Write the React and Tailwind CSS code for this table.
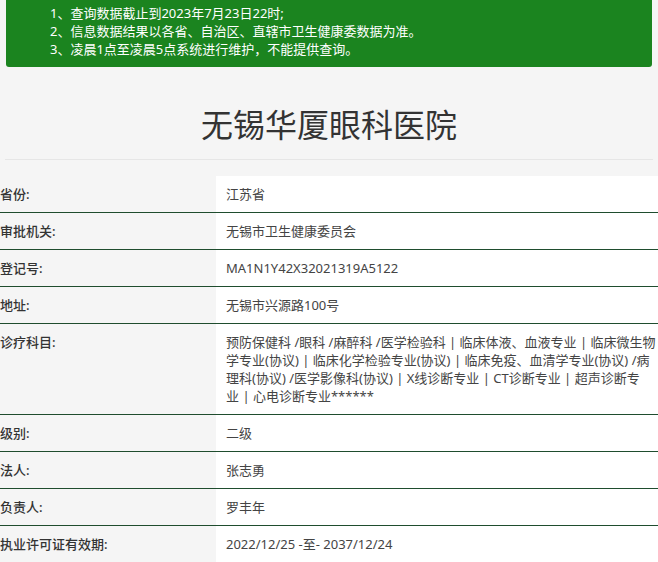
import React from "react";

const scope = [
  "预防保健科 /眼科 /麻醉科 /医学检验科 | 临床体液、血液专业 | 临床微生物",
  "学专业(协议) | 临床化学检验专业(协议) | 临床免疫、血清学专业(协议) /病",
  "理科(协议) /医学影像科(协议) | X线诊断专业 | CT诊断专业 | 超声诊断专",
  "业 | 心电诊断专业******",
];

const rows = [
  { label: "省份:", value: "江苏省" },
  { label: "审批机关:", value: "无锡市卫生健康委员会" },
  { label: "登记号:", value: "MA1N1Y42X32021319A5122" },
  { label: "地址:", value: "无锡市兴源路100号" },
  {
    label: "诊疗科目:",
    value: scope.map((line, i) => (
      <span key={i} className="block whitespace-nowrap">
        {line}
      </span>
    )),
  },
  { label: "级别:", value: "二级" },
  { label: "法人:", value: "张志勇" },
  { label: "负责人:", value: "罗丰年" },
  { label: "执业许可证有效期:", value: "2022/12/25 -至- 2037/12/24" },
];

function App() {
  return (
    <div
      className="bg-[#f5f5f5] min-h-[100vh] text-[#333] overflow-hidden"
      style={{ fontFamily: '"Noto Sans", "Noto Sans CJK SC", sans-serif' }}
    >
      <div className="mx-[6px] bg-[#1b841f] rounded-b-[3px] pl-[44px] pt-[4px] pb-[9px] text-white text-[13px] leading-[18px]">
        <p>1、查询数据截止到2023年7月23日22时;</p>
        <p>2、信息数据结果以各省、自治区、直辖市卫生健康委数据为准。</p>
        <p>3、凌晨1点至凌晨5点系统进行维护，不能提供查询。</p>
      </div>

      <div className="mx-[5px] mt-[36px] pb-[12px] border-b border-[#e6e6e6] text-center">
        <h1 className="text-[32px] leading-[44px] text-[#333]">无锡华厦眼科医院</h1>
      </div>

      <table className="mt-[16px] w-full text-[13px] leading-[18px] border-collapse table-fixed">
        <tbody>
          {rows.map((r, i) => (
            <tr key={r.label} className={i === 0 ? "" : "border-t border-[#1f4d2e]"}>
              <th className="w-[216px] text-left align-top font-medium text-[#333] py-[9px] pl-0">
                {r.label}
              </th>
              <td className="bg-white align-top text-[#444] py-[9px] pl-[10px] pr-0">
                {r.value}
              </td>
            </tr>
          ))}
        </tbody>
      </table>
    </div>
  );
}

export default App;
